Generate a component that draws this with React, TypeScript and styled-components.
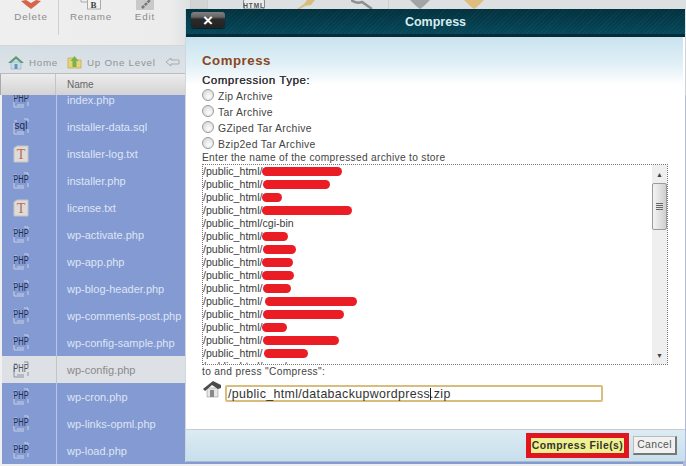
import React from "react";
import styled, { createGlobalStyle } from "styled-components";

const Global = createGlobalStyle`
  html, body { margin: 0; padding: 0; background: #eee; }
  body { font-family: "Liberation Sans", Arial, sans-serif; }
`;

const Page = styled.div`
  position: relative;
  width: 686px;
  height: 466px;
  overflow: hidden;
  display: flex;
  flex-direction: column;
  background: #f0f0f0;
`;

const Toolbar = styled.div`
  height: 46px;
  flex: none;
  display: flex;
  box-sizing: border-box;
  background: linear-gradient(90deg, #efefef 0, #ececec 170px, #dde0e2 190px, #dde0e2 100%);
  border-bottom: 1px solid #d3d7da;
  padding-left: 14px;
`;

const ToolButton = styled.div<{ $w: number }>`
  width: ${(p) => p.$w}px;
  flex: none;
  display: flex;
  flex-direction: column;
  align-items: center;
  font-size: 9.8px;
  line-height: 12px;
  letter-spacing: 0.85px;
  color: #8c8c8c;
  padding-top: 11px;
  position: relative;
  white-space: nowrap;
`;

const ToolIcon = styled.svg`
  position: absolute;
  top: 0;
  left: 50%;
  transform: translateX(-50%);
`;

const ToolSep = styled.div`
  width: 1px;
  flex: none;
  height: 35px;
  background: #cfcfcf;
`;

const ToolGap = styled.div`
  width: 10px;
  flex: none;
`;

const NavBar = styled.div`
  height: 27px;
  flex: none;
  display: flex;
  align-items: center;
  padding: 5px 0 0 8px;
  box-sizing: border-box;
  background: linear-gradient(#d5dee5, #dde3e8);
  font-size: 9.8px;
  letter-spacing: 0.72px;
  color: #8f9498;
`;

const NavItem = styled.span`
  display: flex;
  align-items: center;
  gap: 5px;
  margin-right: 9px;
`;

const HeadRow = styled.div`
  height: 22px;
  flex: none;
  display: flex;
  background: linear-gradient(#ececec, #d3d3d3);
  border-top: 1px solid #bbb;
  box-sizing: border-box;
  font-size: 10px;
  color: #666;
`;

const HeadIconCell = styled.div`
  width: 56px;
  border-right: 1px solid #c4c4c4;
  border-left: 1px solid #aaa;
  box-sizing: border-box;
`;

const HeadName = styled.div`
  padding-left: 11px;
  line-height: 22px;
`;

const List = styled.div`
  flex: 1;
  overflow: hidden;
  margin-left: 2px;
`;

const ListInner = styled.div`
  margin-top: -9px;
`;

const Row = styled.div<{ $active?: boolean }>`
  height: 27px;
  display: flex;
  align-items: center;
  background: ${(p) => (p.$active ? "#dde0e5" : "#839ad2")};
  color: ${(p) => (p.$active ? "#8b8b8b" : "#dfe5f5")};
  font-size: 11px;
`;

const IconCell = styled.div<{ $active?: boolean }>`
  width: 55px;
  height: 100%;
  flex: none;
  display: flex;
  align-items: center;
  justify-content: center;
  padding-right: 16px;
  box-sizing: border-box;
  border-right: 1px solid ${(p) => (p.$active ? "#c4c4c4" : "#b8c5e6")};
`;

const FileName = styled.div`
  padding-left: 10px;
  white-space: nowrap;
`;

const Modal = styled.div`
  position: absolute;
  left: 185px;
  top: 9px;
  width: 500px;
  height: 453px;
  display: flex;
  flex-direction: column;
  background: #fff;
  border-left: 1px solid #cfd6de;
  box-sizing: border-box;
`;

const TitleBar = styled.div`
  height: 28px;
  flex: none;
  position: relative;
  display: flex;
  align-items: center;
  justify-content: center;
  background:
    repeating-linear-gradient(135deg, rgba(255, 255, 255, 0.025) 0 1px, rgba(0, 0, 0, 0.03) 1px 3px),
    linear-gradient(#03323f, #054a5c);
  border-bottom: 3px solid #052c38;
  box-sizing: border-box;
  color: #d8ecee;
  font-size: 12.5px;
  font-weight: bold;
  padding-top: 1px;
`;

const CloseButton = styled.div`
  position: absolute;
  left: 5px;
  top: 3px;
  width: 34px;
  height: 16px;
  border-radius: 3px;
  background: linear-gradient(#808080 0, #666 30%, #2a2a2a 45%, #222 100%);
  display: flex;
  align-items: center;
  justify-content: center;
  color: #fff;
  font: bold 17px/1 "Liberation Sans", sans-serif;
  box-shadow: 0 1px 1px #03222c;
`;

const Body = styled.div`
  flex: 1;
  min-height: 0;
  padding: 16px 0 0 16px;
  margin-right: 2px;
  background: linear-gradient(#c9e3ef 0, #e4f1f7 30px, #fff 48px);
  color: #444;
  font-size: 10.4px;
  letter-spacing: 0.32px;
`;

const Heading = styled.h2`
  margin: 0 0 5px;
  font-size: 13.2px;
  line-height: 15px;
  font-weight: bold;
  letter-spacing: 0.55px;
  color: #8a4622;
`;

const TypeLabel = styled.div`
  line-height: 14px;
  margin-bottom: 1px;
  color: #333;
  font-size: 11.4px;
  letter-spacing: 0.6px;
  text-shadow: 0.2px 0 0 #333;
`;

const RadioRow = styled.label`
  height: 16px;
  display: flex;
  align-items: center;
  gap: 4px;
`;

const Radio = styled.span`
  width: 12px;
  height: 12px;
  box-sizing: border-box;
  border-radius: 50%;
  border: 1px solid #9a9a9a;
  background: radial-gradient(circle at 60% 65%, #fdfdfd, #d0d0d0);
  margin-top: -3px;
`;

const Caption = styled.div`
  line-height: 13px;
  margin-top: -1px;
  font-size: 10.2px;
  letter-spacing: 0.3px;
`;

const Select = styled.div`
  width: 466px;
  height: 201px;
  box-sizing: border-box;
  border: 1px dotted #777;
  display: flex;
  overflow: hidden;
`;

const Options = styled.div`
  flex: 1;
  overflow: hidden;
  font-size: 10.6px;
  letter-spacing: 0;
  color: #3c3c3c;
`;

const Option = styled.div`
  height: 13px;
  line-height: 13px;
  white-space: nowrap;
  display: flex;
`;

const Redact = styled.span<{ $w: number; $x: number }>`
  display: inline-block;
  width: ${(p) => p.$w}px;
  height: 9px;
  margin: 2px 0 0 ${(p) => p.$x}px;
  background: #ea1c24;
  border-radius: 5px;
`;

const Scrollbar = styled.div`
  width: 15px;
  flex: none;
  display: flex;
  flex-direction: column;
  background: #efefef;
`;

const ScrollArrow = styled.div`
  height: 18px;
  flex: none;
  display: flex;
  align-items: center;
  justify-content: center;
  font-size: 7px;
  color: #444;
`;

const ScrollThumb = styled.div`
  height: 47px;
  flex: none;
  border: 1px solid #9a9a9a;
  border-radius: 2px;
  box-sizing: border-box;
  background: linear-gradient(90deg, #f4f4f4, #cfcfcf);
  display: flex;
  flex-direction: column;
  align-items: center;
  justify-content: center;
  gap: 1px;
`;

const Grip = styled.span`
  width: 7px;
  height: 1px;
  background: #666;
`;

const ScrollTrack = styled.div`
  flex: 1;
`;

const PathLabel = styled.div`
  line-height: 14px;
  font-size: 10.2px;
`;

const PathRow = styled.div`
  display: flex;
  align-items: flex-start;
  gap: 3px;
  margin-top: 1px;
  padding-left: 1px;
`;

const PathInput = styled.div`
  width: 378px;
  height: 17px;
  margin-top: 5px;
  box-sizing: border-box;
  border: 2px solid #d8bd7c;
  border-radius: 2px;
  background: #fff;
  color: #333;
  font-size: 12.4px;
  line-height: 14px;
  padding-left: 1px;
  letter-spacing: 0.35px;
  white-space: nowrap;
`;

const Caret = styled.span`
  display: inline-block;
  width: 1px;
  height: 12px;
  margin-right: -1px;
  vertical-align: -2px;
  background: #222;
`;

const Footer = styled.div`
  height: 33px;
  flex: none;
  display: flex;
  justify-content: flex-end;
  align-items: center;
  gap: 4px;
  padding-right: 8px;
  box-sizing: border-box;
  border-top: 1px solid #c8cdd0;
  background: linear-gradient(#dcebf3, #c7dfec);
  border-bottom: 1px solid #aab8c8;
`;

const PrimaryButton = styled.div`
  height: 25px;
  width: 103px;
  box-sizing: border-box;
  border: 5px solid #e0151f;
  background: #f1f08e;
  font: bold 10.4px/15px "Liberation Sans", sans-serif;
  letter-spacing: 0.45px;
  color: #333;
  text-align: center;
  white-space: nowrap;
`;

const CancelButton = styled.div`
  height: 19px;
  width: 44px;
  box-sizing: border-box;
  border: 1px solid #bbb;
  border-right: 2px solid #777;
  border-bottom: 2px solid #777;
  background: #f1f1f1;
  font-size: 10.4px;
  line-height: 16px;
  letter-spacing: 0.4px;
  text-align: center;
  color: #555;
`;

const RightEdge = styled.div`
  position: absolute;
  left: 683px;
  top: 37px;
  width: 3px;
  height: 429px;
  background: linear-gradient(#cfd2d6 0, #cfd2d6 58px, #aeb9dc 59px);
`;

const FileIcon = ({ kind, active }: { kind: string; active: boolean }) => {
  if (kind === "txt") {
    return (
      <svg width="18" height="18" viewBox="0 0 18 18">
        <path d="M2 3 L5 1 H16 V17 H2 Z" fill="#dfdcd8" stroke="#c4c4c4" />
        <text x="9" y="14" fontSize="14" fontFamily="Liberation Serif" textAnchor="middle" fill="#bd6a58">T</text>
      </svg>
    );
  }
  const frame = active ? "#8f939c" : "#c8d0e6";
  return (
    <svg width="18" height="17" viewBox="0 0 18 17">
      <path d="M2 3 H5 M12 1 H16 V4 M2 5 V16 H12 M16 11 V15 M5 14 H12" fill="none" stroke={frame} />
      {kind === "sql" ? (
        <text x="9" y="11" fontSize="10" fontFamily="Liberation Sans" textAnchor="middle" fill="#1f2a50">sql</text>
      ) : (
        <text
          transform="scale(0.68 1)"
          x="13.2"
          y="11"
          fontSize="11"
          fontFamily="Liberation Sans"
          textAnchor="middle"
          fill={active ? "#4a4f5c" : "#1f2a50"}
        >
          PHP
        </text>
      )}
    </svg>
  );
};

const files = [
  ["index.php", "php"], ["installer-data.sql", "sql"], ["installer-log.txt", "txt"], ["installer.php", "php"],
  ["license.txt", "txt"], ["wp-activate.php", "php"], ["wp-app.php", "php"], ["wp-blog-header.php", "php"],
  ["wp-comments-post.php", "php"], ["wp-config-sample.php", "php"], ["wp-config.php", "php"], ["wp-cron.php", "php"],
  ["wp-links-opml.php", "php"], ["wp-load.php", "php"],
];

const options: [string, number, number][] = [
  ["/public_html/", 80, 0], ["/public_html/", 67, 1], ["/public_html/", 20, 0], ["/public_html/", 90, 0],
  ["/public_html/cgi-bin", 0, 0], ["/public_html/", 26, 0], ["/public_html/", 33, 1], ["/public_html/", 31, 0],
  ["/public_html/", 32, 0], ["/public_html/", 28, 1], ["/public_html/", 92, 3], ["/public_html/", 81, 1],
  ["/public_html/", 25, 0], ["/public_html/", 76, 1], ["/public_html/", 44, 2], ["/public_html/pear/peg", 0, 0],
];

export default function App() {
  return (
    <Page>
      <Global />
      <Toolbar>
        <ToolButton $w={34}>
          <ToolIcon width="22" height="10" viewBox="0 0 22 10">
            <path d="M1 1 L6 0 L11 3 L16 0 L21 1 L15 6 L11 9 L7 6 Z" fill="#d6644a" />
          </ToolIcon>
          Delete
        </ToolButton>
        <ToolGap />
        <ToolSep />
        <ToolButton $w={64}>
          <ToolIcon width="24" height="11" viewBox="0 0 24 11">
            <path d="M2 0 V2 H9" fill="none" stroke="#aaa" />
            <rect x="8.5" y="-1" width="13" height="10" fill="#f2f2f2" stroke="#aaa" />
            <text x="15" y="7.5" fontSize="9" fontFamily="Liberation Serif" fontWeight="bold" textAnchor="middle" fill="#444">B</text>
          </ToolIcon>
          Rename
        </ToolButton>
        <ToolButton $w={44}>
          <ToolIcon width="18" height="10" viewBox="0 0 18 10">
            <rect x="0" y="0" width="18" height="10" fill="#c9c9c9" />
            <path d="M6 8 L14 0" stroke="#777" strokeWidth="2.5" strokeDasharray="3 1" />
          </ToolIcon>
          Edit
        </ToolButton>
        <ToolButton $w={64}>
          <ToolIcon width="18" height="9" viewBox="0 0 18 9">
            <rect x="0" y="-2" width="18" height="11" fill="#d2d4d5" stroke="#c4c6c7" />
          </ToolIcon>
        </ToolButton>
        <ToolButton $w={46}>
          <ToolIcon width="24" height="10" viewBox="0 0 24 10">
            <rect x="1.5" y="-1" width="21" height="10" rx="2" fill="#e8eaeb" stroke="#888" />
            <text x="12" y="7.5" fontSize="6.5" fontFamily="Liberation Sans" fontWeight="bold" textAnchor="middle" fill="#555">HTML</text>
          </ToolIcon>
        </ToolButton>
        <ToolButton $w={58}>
          <ToolIcon width="20" height="9" viewBox="0 0 20 9">
            <path d="M1 9 L8 4 L11 0 H19 L15 5 L9 6 L4 9 Z" fill="#d9bd7e" />
          </ToolIcon>
        </ToolButton>
        <ToolButton $w={53}>
          <ToolIcon width="22" height="9" viewBox="0 0 22 9">
            <path d="M0 0 Q5 4 11 2 L21 9" fill="none" stroke="#8d8f90" strokeWidth="2.5" />
          </ToolIcon>
        </ToolButton>
        <ToolSep />
        <ToolButton $w={62}>
          <ToolIcon width="20" height="9" viewBox="0 0 20 9">
            <path d="M0 0 H20 L14 6 L10 9 L6 6 Z" fill="#a2a4a6" />
          </ToolIcon>
        </ToolButton>
        <ToolButton $w={46}>
          <ToolIcon width="20" height="9" viewBox="0 0 20 9">
            <path d="M0 0 H20 L14 6 L10 9 L6 6 Z" fill="#e0bd7f" />
          </ToolIcon>
        </ToolButton>
      </Toolbar>
      <NavBar>
        <NavItem>
          <svg width="16" height="15" viewBox="0 0 16 15">
            <path d="M3 7 H13 V14 H3 Z" fill="#c5dfee" stroke="#8fb0c4" strokeWidth="0.6" />
            <path d="M0 8 L8 1 L16 8 L13 8 L8 4 L3 8 Z" fill="#5d9a73" />
            <rect x="6.5" y="9" width="3" height="5" fill="#6d93a8" />
          </svg>
          Home
        </NavItem>
        <NavItem>
          <svg width="15" height="14" viewBox="0 0 15 14">
            <path d="M1 3 H6 L7 5 H14 V13 H1 Z" fill="#e8d27a" stroke="#c9b75f" />
            <path d="M7.5 1 L11.5 6 H9.5 V12 H5.5 V6 H3.5 Z" fill="#77b34f" />
          </svg>
          Up One Level
        </NavItem>
        <svg width="15" height="10" viewBox="0 0 15 10">
          <path d="M1 5 L6 1 V3 H14 V7 H6 V9 Z" fill="#dde2e6" stroke="#a5abb0" />
        </svg>
      </NavBar>
      <HeadRow>
        <HeadIconCell />
        <HeadName>Name</HeadName>
      </HeadRow>
      <List>
        <ListInner>
          {files.map(([name, kind]) => {
            const active = name === "wp-config.php";
            return (
              <Row key={name} $active={active}>
                <IconCell $active={active}>
                  <FileIcon kind={kind} active={active} />
                </IconCell>
                <FileName>{name}</FileName>
              </Row>
            );
          })}
        </ListInner>
      </List>
      <RightEdge />
      <Modal>
        <TitleBar>
          <CloseButton>×</CloseButton>
          Compress
        </TitleBar>
        <Body>
          <Heading>Compress</Heading>
          <TypeLabel>Compression Type:</TypeLabel>
          <RadioRow><Radio />Zip Archive</RadioRow>
          <RadioRow><Radio />Tar Archive</RadioRow>
          <RadioRow><Radio />GZiped Tar Archive</RadioRow>
          <RadioRow><Radio />Bzip2ed Tar Archive</RadioRow>
          <Caption>Enter the name of the compressed archive to store</Caption>
          <Select>
            <Options>
              {options.map(([t, w, x], i) => (
                <Option key={i}>
                  {t}
                  {w > 0 && <Redact $w={w} $x={x} />}
                </Option>
              ))}
            </Options>
            <Scrollbar>
              <ScrollArrow>▲</ScrollArrow>
              <ScrollThumb><Grip /><Grip /><Grip /><Grip /></ScrollThumb>
              <ScrollTrack />
              <ScrollArrow>▼</ScrollArrow>
            </Scrollbar>
          </Select>
          <PathLabel>to and press "Compress":</PathLabel>
          <PathRow>
            <svg width="19" height="18" viewBox="0 0 19 18">
              <path d="M4 8 H15 V17 H4 Z" fill="#e6e6e6" stroke="#999" strokeWidth="0.6" />
              <path d="M0 9 L10 1 L18 5 V8 L15 9 L9 5 L2 11 Z" fill="#4a4a4a" />
              <rect x="7" y="10" width="4" height="7" fill="#888" />
            </svg>
            <PathInput>/public_html/databackupwordpress<Caret />.zip</PathInput>
          </PathRow>
        </Body>
        <Footer>
          <PrimaryButton>Compress File(s)</PrimaryButton>
          <CancelButton>Cancel</CancelButton>
        </Footer>
      </Modal>
    </Page>
  );
}
